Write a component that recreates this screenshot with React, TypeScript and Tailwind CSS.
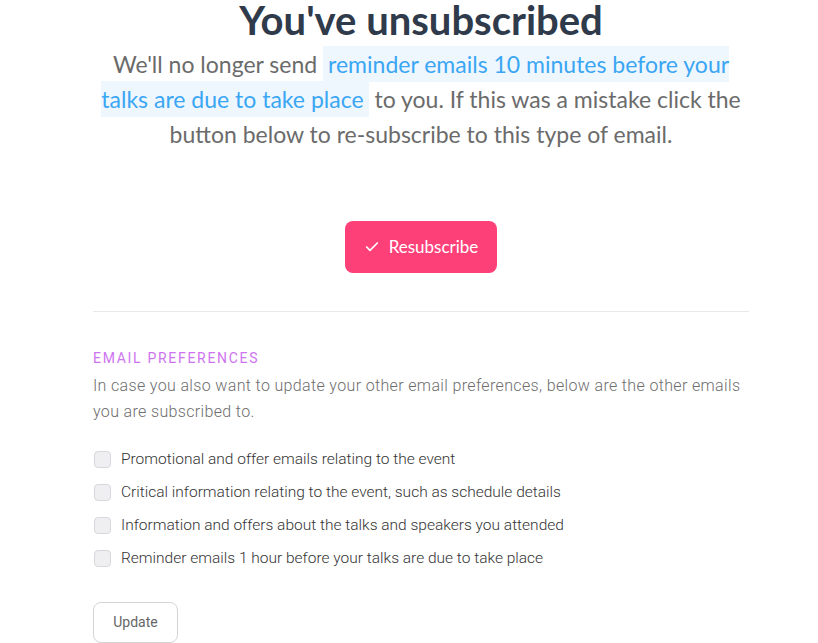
import { Check } from 'lucide-react'

const PREFERENCES = [
  'Promotional and offer emails relating to the event',
  'Critical information relating to the event, such as schedule details',
  'Information and offers about the talks and speakers you attended',
  'Reminder emails 1 hour before your talks are due to take place',
]

const App = () => {
  return (
    <div className="min-h-[643px] bg-white">
      <div className="ml-[93px] w-[656px]">
        <div className="text-center font-['Lato',sans-serif]">
          <h1 className="text-[40px] font-bold leading-[40px] text-[#2f3a4b]">You've unsubscribed</h1>
          <p className="mx-auto mt-[7px] w-[646px] text-[23px] leading-[35px] text-[#6b6b6b]">
            We'll no longer send{' '}
            <span className="bg-[#eff7fe] px-[5px] py-[4px] text-[#3ba6f3]">
              reminder emails 10 minutes before your talks are due to take place
            </span>{' '}
            to you. If this was a mistake click the button below to re-subscribe to this type of
            email.
          </p>
          <div className="mt-[69px] flex justify-center">
            <button className="flex h-[52px] w-[152px] items-center justify-center gap-[9px] rounded-[8px] bg-[#fe4079] text-[17px] text-white">
              <Check className="h-[16px] w-[16px]" strokeWidth={2.5} />
              Resubscribe
            </button>
          </div>
        </div>

        <div className="mt-[38px] h-px bg-[#e8e8e8]" />

        <div className="font-['Roboto',sans-serif]">
          <p className="mt-[36px] text-[14px] tracking-[1.7px] text-[#cd74f0]">EMAIL PREFERENCES</p>
          <p className="mt-[4px] text-[16px] font-light leading-[26px] tracking-[0.35px] text-[#6e6e6e]">
            In case you also want to update your other email preferences, below are the other emails
            you are subscribed to.
          </p>

          <div className="mt-[25px] flex flex-col gap-[14px]">
            {PREFERENCES.map((label) => (
              <label key={label} className="flex items-center gap-[10px] text-[15.5px] font-light leading-[19px] text-[#333]">
                <span className="ml-px h-[17px] w-[17px] rounded-[4px] border border-[#d7d7dd] bg-[#efeff2]" />
                {label}
              </label>
            ))}
          </div>

          <button className="mt-[34px] h-[41px] w-[85px] rounded-[8px] border border-[#d4d4d8] bg-white text-[14px] text-[#666]">
            Update
          </button>
        </div>
      </div>
    </div>
  )
}

export default App
